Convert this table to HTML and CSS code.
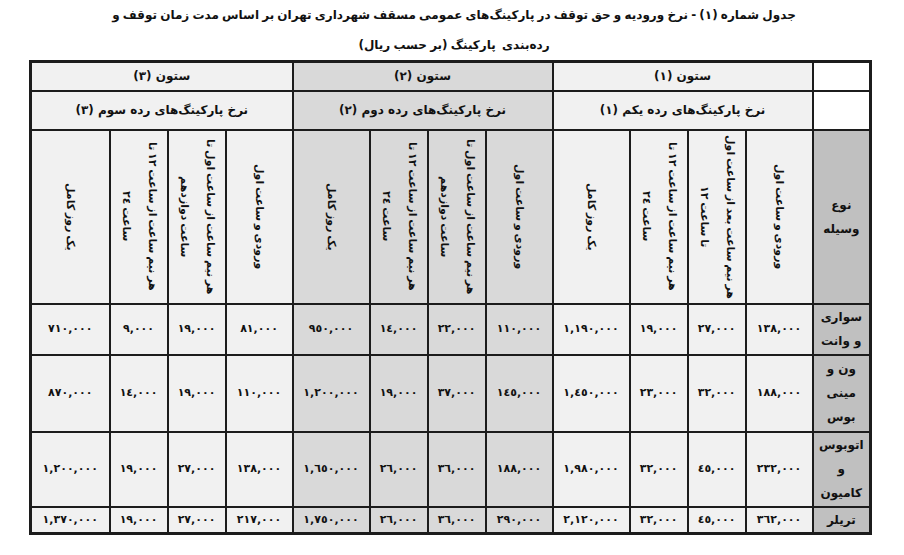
FILE: index.html
```html
<!DOCTYPE html>
<html lang="fa">
<head>
<meta charset="utf-8">
<link rel="stylesheet" href="styles.css">
</head>
<body>
<div class="title" dir="rtl">
  <div class="tline">جدول شماره (١) - نرخ ورودیه و حق توقف در پارکینگ‌های عمومی مسقف شهرداری تهران بر اساس مدت زمان توقف و</div>
  <div class="tline">رده‌بندی&nbsp; پارکینگ (بر حسب ریال)</div>
</div>
<table class="tbl" dir="rtl">
  <colgroup>
    <col class="c-veh">
    <col class="c-a"><col class="c-b"><col class="c-b"><col class="c-d">
    <col class="c-a"><col class="c-b"><col class="c-b"><col class="c-d">
    <col class="c-a"><col class="c-b"><col class="c-b"><col class="c-e">
  </colgroup>
  <tr class="r1">
    <td class="blank"></td>
    <td colspan="4" class="light">ستون (١)</td>
    <td colspan="4" class="dark">ستون (٢)</td>
    <td colspan="4" class="light">ستون (٣)</td>
  </tr>
  <tr class="r2">
    <td class="blank"></td>
    <td colspan="4" class="light">نرخ پارکینگ‌های رده یکم (١)</td>
    <td colspan="4" class="dark">نرخ پارکینگ‌های رده دوم (٢)</td>
    <td colspan="4" class="light">نرخ پارکینگ‌های رده سوم (٣)</td>
  </tr>
  <tr class="r3">
    <td class="veh">نوع<br>وسیله</td>
    <td class="light"><span class="rot">ورودی و ساعت اول</span></td>
    <td class="light"><span class="rot">هر نیم ساعت بعد از ساعت اول<br>تا ساعت ١٢</span></td>
    <td class="light"><span class="rot">هر نیم ساعت از ساعت ١٢ تا<br>ساعت ٢٤</span></td>
    <td class="light"><span class="rot">یک روز کامل</span></td>
    <td class="dark"><span class="rot">ورودی و ساعت اول</span></td>
    <td class="dark"><span class="rot">هر نیم ساعت از ساعت اول تا<br>ساعت دوازدهم</span></td>
    <td class="dark"><span class="rot">هر نیم ساعت از ساعت ١٢ تا<br>ساعت ٢٤</span></td>
    <td class="dark"><span class="rot">یک روز کامل</span></td>
    <td class="light"><span class="rot">ورودی و ساعت اول</span></td>
    <td class="light"><span class="rot">هر نیم ساعت از ساعت اول تا<br>ساعت دوازدهم</span></td>
    <td class="light"><span class="rot">هر نیم ساعت از ساعت ١٢ تا<br>ساعت ٢٤</span></td>
    <td class="light"><span class="rot">یک روز کامل</span></td>
  </tr>
  <tr class="d1">
    <td class="veh">سواری<br>و وانت</td>
    <td class="light num">١٣٨,٠٠٠</td><td class="light num">٢٧,٠٠٠</td><td class="light num">١٩,٠٠٠</td><td class="light num">١,١٩٠,٠٠٠</td>
    <td class="dark num">١١٠,٠٠٠</td><td class="dark num">٢٢,٠٠٠</td><td class="dark num">١٤,٠٠٠</td><td class="dark num">٩٥٠,٠٠٠</td>
    <td class="light num">٨١,٠٠٠</td><td class="light num">١٩,٠٠٠</td><td class="light num">٩,٠٠٠</td><td class="light num">٧١٠,٠٠٠</td>
  </tr>
  <tr class="d2">
    <td class="veh">ون و<br>مینی<br>بوس</td>
    <td class="light num">١٨٨,٠٠٠</td><td class="light num">٣٢,٠٠٠</td><td class="light num">٢٣,٠٠٠</td><td class="light num">١,٤٥٠,٠٠٠</td>
    <td class="dark num">١٤٥,٠٠٠</td><td class="dark num">٣٧,٠٠٠</td><td class="dark num">١٩,٠٠٠</td><td class="dark num">١,٢٠٠,٠٠٠</td>
    <td class="light num">١١٠,٠٠٠</td><td class="light num">١٩,٠٠٠</td><td class="light num">١٤,٠٠٠</td><td class="light num">٨٧٠,٠٠٠</td>
  </tr>
  <tr class="d3">
    <td class="veh">اتوبوس<br>و<br>کامیون</td>
    <td class="light num">٢٣٢,٠٠٠</td><td class="light num">٤٥,٠٠٠</td><td class="light num">٣٢,٠٠٠</td><td class="light num">١,٩٨٠,٠٠٠</td>
    <td class="dark num">١٨٨,٠٠٠</td><td class="dark num">٣٦,٠٠٠</td><td class="dark num">٢٦,٠٠٠</td><td class="dark num">١,٦٥٠,٠٠٠</td>
    <td class="light num">١٣٨,٠٠٠</td><td class="light num">٢٧,٠٠٠</td><td class="light num">١٩,٠٠٠</td><td class="light num">١,٢٠٠,٠٠٠</td>
  </tr>
  <tr class="d4">
    <td class="veh">تریلر</td>
    <td class="light num">٣٦٢,٠٠٠</td><td class="light num">٤٥,٠٠٠</td><td class="light num">٣٢,٠٠٠</td><td class="light num">٢,١٢٠,٠٠٠</td>
    <td class="dark num">٢٩٠,٠٠٠</td><td class="dark num">٣٦,٠٠٠</td><td class="dark num">٢٦,٠٠٠</td><td class="dark num">١,٧٥٠,٠٠٠</td>
    <td class="light num">٢١٧,٠٠٠</td><td class="light num">٢٧,٠٠٠</td><td class="light num">١٩,٠٠٠</td><td class="light num">١,٣٧٠,٠٠٠</td>
  </tr>
</table>
</body>
</html>
```
FILE: styles.css
```css
html, body {
  margin: 0;
  padding: 0;
  background: #ffffff;
}
body {
  font-family: "DejaVu Sans", "Noto Sans", sans-serif;
  color: #111111;
  width: 904px;
  height: 555px;
  overflow: hidden;
}
.title {
  width: 904px;
  text-align: center;
  font-weight: bold;
  font-size: 12px;
  word-spacing: -1px;
  line-height: 30px;
  height: 60px;
  padding-left: 4px;
  box-sizing: border-box;
}
.tline {
  white-space: nowrap;
}
.tbl {
  margin-left: 29px;
  width: 840px;
  border-collapse: collapse;
  table-layout: fixed;
  border: 3px solid #1c1c1c;
}
.c-veh { width: 58px; }
.c-a { width: 67px; }
.c-b { width: 58px; }
.c-d { width: 77px; }
.c-e { width: 79px; }
.tbl td {
  border: 2px solid #1c1c1c;
  padding: 0;
  text-align: center;
  vertical-align: middle;
  font-weight: bold;
  font-size: 12px;
  line-height: 18px;
  white-space: nowrap;
  overflow: hidden;
}
.r1 { height: 29px; }
.r2 { height: 39px; }
.r3 { height: 174px; }
.d1 { height: 51px; }
.d2 { height: 77px; }
.d3 { height: 75px; }
.d4 { height: 25px; }
.blank { background: #ffffff; }
.light { background: #f1f1f1; }
.dark { background: #d9d9d9; }
.veh {
  background: #c0c0c0;
  font-size: 12px;
  line-height: 24px;
}
.tbl td.veh { line-height: 24px; }
.tbl td.num {
  font-size: 11px;
  letter-spacing: 0.3px;
}
.rot {
  display: inline-block;
  writing-mode: vertical-rl;
  text-align: center;
  line-height: 26px;
  font-size: 11px;
  word-spacing: -1px;
  vertical-align: middle;
}
```
